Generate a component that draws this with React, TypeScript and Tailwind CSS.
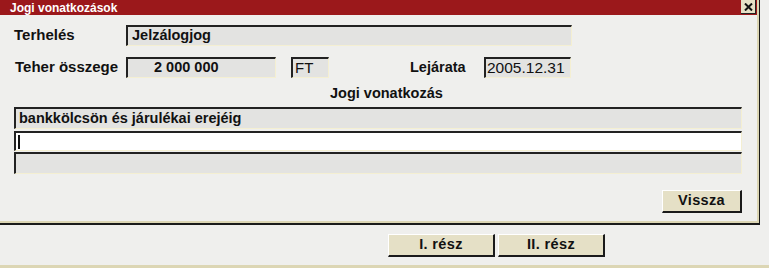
const font = { fontFamily: '"Liberation Sans", Arial, sans-serif' };

function Field({ className = "", children }: { className?: string; children?: React.ReactNode }) {
  return (
    <div
      className={`flex items-center border-t-2 border-l-2 border-b border-r border-t-[#222] border-l-[#222] border-b-[#f4efd2] border-r-[#f4efd2] bg-[#e3e3e1] text-[14.5px] font-bold text-[#111] ${className}`}
    >
      {children}
    </div>
  );
}

function Button({ label, className = "" }: { label: string; className?: string }) {
  return (
    <button
      className={`flex items-center justify-center border-t border-l border-b-2 border-r-2 border-t-white border-l-white border-b-[#1a1a1a] border-r-[#1a1a1a] bg-[#e5e0c6] text-[14.5px] font-bold tracking-wide text-[#111] ${className}`}
    >
      {label}
    </button>
  );
}

export default function App() {
  return (
    <div className="h-[268px] w-[769px] overflow-hidden bg-[#efefed]" style={font}>
      <div className="w-[760px] border-r border-b-2 border-r-[#1a1a1a] border-b-[#1a1a1a]">
        <div className="border-r-2 border-b-2 border-r-[#dcd6b4] border-b-[#dcd6b4]">
          {/* title bar */}
          <div className="flex h-[15px] items-center justify-between bg-[#9b181b] pl-[10px]">
            <span className="text-[12px] font-bold leading-none text-white">Jogi vonatkozások</span>
            <div className="mr-[1px] flex h-[14px] w-[15px] items-center justify-center self-start border-r border-b border-r-[#222] border-b-[#222] bg-[#e5e0c6]">
              <svg width="9" height="8" viewBox="0 0 9 8">
                <path d="M1 0.5 L8 7.5 M8 0.5 L1 7.5" stroke="#111" strokeWidth="2" />
              </svg>
            </div>
          </div>

          <div className="flex flex-col pl-[14px] pr-[16px] pt-[10px] pb-[8px]">
            <div className="flex h-[20px] items-center">
              <span className="w-[112px] text-[15px] font-bold text-[#111]">Terhelés</span>
              <Field className="h-[21px] w-[446px] pl-[4px]">Jelzálogjog</Field>
            </div>

            <div className="mt-[12px] flex h-[21px] items-center">
              <span className="w-[112px] pl-[1px] text-[15px] font-bold text-[#111]">Teher összege</span>
              <Field className="h-[21px] w-[150px] pl-[26px]">
                <span className="font-bold">2 000 000</span>
              </Field>
              <Field className="ml-[15px] h-[21px] w-[38px] pl-[2px]">
                <span className="text-[15px] font-normal">FT</span>
              </Field>
              <span className="ml-[81px] w-[74px] text-[14.5px] font-bold text-[#111]">Lejárata</span>
              <Field className="h-[21px] w-[87px] pl-[1px]">
                <span className="text-[15.5px] font-normal">2005.12.31</span>
              </Field>
            </div>

            <div className="mt-[8px] flex h-[16px] items-center pl-[316px] text-[14.5px] font-bold text-[#111]">
              Jogi vonatkozás
            </div>

            <Field className="mt-[5px] h-[22px] w-[728px] pl-[3px]">bankkölcsön és járulékai erejéig</Field>
            <Field className="mt-[2px] h-[20px] w-[728px] bg-white pl-[2px]">
              <span className="h-[14px] w-[2px] bg-[#111]" />
            </Field>
            <Field className="mt-[1px] h-[22px] w-[728px]" />

            <div className="mt-[16px] flex w-[728px] justify-end">
              <Button label="Vissza" className="h-[23px] w-[80px]" />
            </div>
          </div>
        </div>
      </div>

      <div className="flex h-[40px] items-center pl-[388px] pt-[1px]">
        <Button label="I. rész" className="h-[23px] w-[107px]" />
        <Button label="II. rész" className="ml-[3px] h-[23px] w-[107px]" />
      </div>
      <div className="h-[3px] w-full bg-[#dcd6b4]" />
    </div>
  );
}
